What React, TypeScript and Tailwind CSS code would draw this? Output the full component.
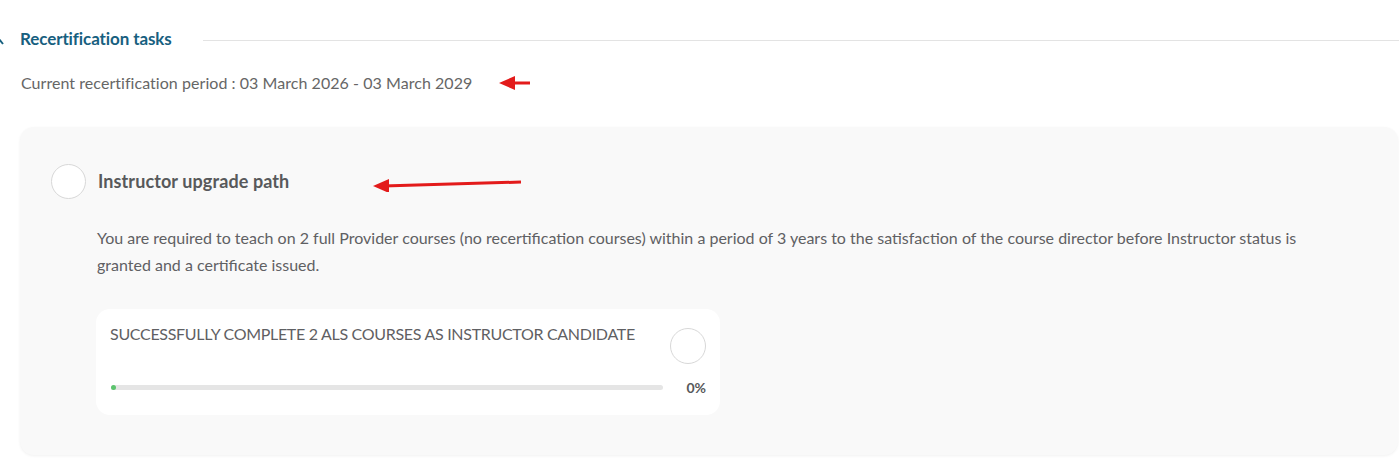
import React from 'react';

// Red annotation arrow drawn over the screenshot
const Arrow: React.FC<{ width: number; tilt?: number }> = ({ width, tilt = 0 }) => (
    <svg width={width} height={16} viewBox={`0 0 ${width} 16`} className="block">
        <line x1={10} y1={8 + tilt / 2} x2={width - 1} y2={8 - tilt / 2} stroke="#e31b1b" strokeWidth={3} />
        <polygon points={`0,${8 + tilt / 2} 16,${1 + tilt / 2} 16,${15 + tilt / 2}`} fill="#e31b1b" />
    </svg>
);

const Circle: React.FC<{ size: string }> = ({ size }) => (
    <div className={`${size} shrink-0 rounded-full border border-[#d8d8d8] bg-white`} />
);

export default function App() {
    return (
        <div className="w-[1399px] h-[468px] overflow-hidden bg-white font-['Lato',sans-serif] text-[#5f6063]">
            {/* section header */}
            <div className="flex items-center h-[20px] mt-[29px]">
                <svg width="8" height="10" viewBox="0 0 8 10" className="-ml-[1px] mt-[3px]">
                    <path d="M0 3 L4 8" stroke="#17607f" strokeWidth="2" fill="none" />
                </svg>
                <h3 className="ml-[13px] text-[17px] font-bold text-[#17607f] tracking-[-0.1px]">Recertification tasks</h3>
                <div className="flex-1 ml-[31px] mt-[2px] h-px bg-[#e3e3e3]" />
            </div>

            <div className="flex items-center mt-[24px] ml-[21px] h-[20px]">
                <p className="text-[16px] text-[#666] tracking-[0.05px]">Current recertification period : 03 March 2026 - 03 March 2029</p>
                <div className="ml-[27px]">
                    <Arrow width={32} />
                </div>
            </div>

            {/* path card */}
            <div className="ml-[20px] mr-[1px] mt-[34px] h-[328px] rounded-[14px] bg-[#f9f9f9] shadow-[0_1px_3px_rgba(0,0,0,0.06)] pt-[37px] pl-[31px] pr-[40px]">
                <div className="flex items-center">
                    <Circle size="w-[35px] h-[35px]" />
                    <h4 className="ml-[12px] text-[18px] font-bold text-[#58595b] tracking-[0.1px]">Instructor upgrade path</h4>
                    <div className="ml-[84px] mt-[4px]">
                        <Arrow width={149} tilt={4} />
                    </div>
                </div>

                <p className="mt-[25px] ml-[46px] text-[16px] leading-[27px] text-[#5f6063] max-w-[1250px]">
                    You are required to teach on 2 full Provider courses (no recertification courses) within a period of 3 years to the satisfaction of the course director before Instructor status is granted and a certificate issued.
                </p>

                <div className="mt-[31px] ml-[45px] w-[624px] h-[106px] rounded-[14px] bg-white pl-[14px] pr-[14px] pt-[15px]">
                    <div className="flex items-start justify-between">
                        <span className="text-[16px] uppercase text-[#5f6063] tracking-[-0.3px] leading-[20px]">
                            Successfully complete 2 ALS courses as instructor candidate
                        </span>
                        <div className="mt-[4px]">
                            <Circle size="w-[36px] h-[36px]" />
                        </div>
                    </div>
                    <div className="flex items-center mt-[13px]">
                        <div className="relative ml-[1px] w-[552px] h-[5px] rounded-full bg-[#e5e5e5]">
                            <div className="absolute left-0 top-0 w-[5px] h-[5px] rounded-full bg-[#5cc46e]" />
                        </div>
                        <span className="ml-auto text-[14px] font-bold text-[#58595b]">0%</span>
                    </div>
                </div>
            </div>
        </div>
    );
}
